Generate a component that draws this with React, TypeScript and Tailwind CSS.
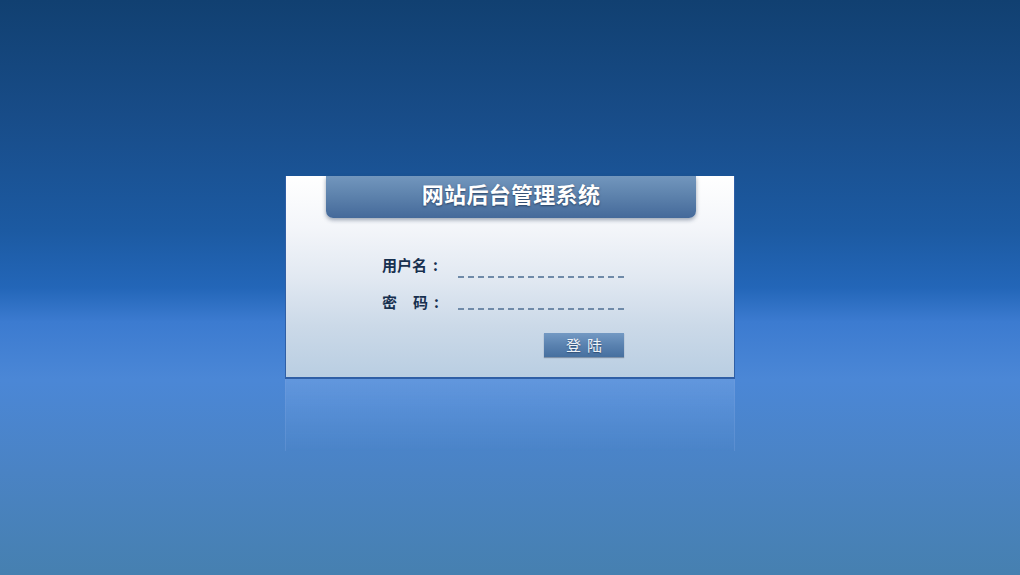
import React from "react";

const FONT = '"Noto Sans CJK SC", "Liberation Sans", sans-serif';

function DashedInput({ type = "text" }: { type?: string }) {
  return (
    <input
      type={type}
      className="w-[166px] h-[20px] bg-transparent outline-none border-0 border-b-2 border-dashed border-[#6f8aa8] text-sm text-[#1b3556]"
    />
  );
}

export default function App() {
  return (
    <div
      className="w-full h-[575px] overflow-hidden flex flex-col items-center pt-[176px] bg-[linear-gradient(180deg,#114071_0%,#184c88_20%,#1c5aa2_40%,#2366b8_50%,#3c7bd0_56%,#4b87d6_66%,#4a83c4_82%,#4680b0_100%)]"
      style={{ fontFamily: FONT }}
    >
      {/* login panel */}
      <div className="relative w-[450px] h-[203px] border-x border-b-2 border-[#2f5fa6] bg-[linear-gradient(180deg,#ffffff_0%,#f4f6fa_25%,#e2e9f2_50%,#cbd9e8_75%,#b9cee2_100%)]">
        <div className="absolute left-[40px] top-0 w-[370px] h-[42px] pb-[7px] rounded-b-[7px] bg-[linear-gradient(180deg,#7296bd_0%,#5e83ad_45%,#44699a_100%)] shadow-[0_2px_4px_rgba(40,60,90,0.45)] flex items-center justify-center">
          <span className="text-[22px] font-bold text-white tracking-[0.3px] [text-shadow:0_1px_2px_rgba(20,40,70,0.7)]">
            网站后台管理系统
          </span>
        </div>

        <div className="pt-[76px] pl-[96px] flex flex-col">
          <div className="flex items-end h-[26px]">
            <span className="w-[76px] text-[15px] font-bold text-[#17304f] leading-none pb-[6px] flex">
              <span>用户名</span>
              <span className="ml-[6px]">:</span>
            </span>
            <DashedInput />
          </div>
          <div className="flex items-end h-[26px] mt-[6px]">
            <span className="w-[76px] text-[15px] font-bold text-[#17304f] leading-none pb-[1px] flex">
              <span>密</span>
              <span className="ml-[16px]">码</span>
              <span className="ml-[6px]">:</span>
            </span>
            <DashedInput type="password" />
          </div>
          <div className="flex pl-[162px] mt-[23px]">
            <button className="w-[80px] h-[24px] pb-[2px] leading-none text-[15px] text-[#eef3f8] tracking-[6px] pl-[6px] bg-[linear-gradient(180deg,#7399c3_0%,#5a82b0_50%,#46709f_100%)] shadow-[0_1px_1px_rgba(30,50,80,0.4)] [text-shadow:0_1px_1px_rgba(20,40,70,0.5)]">
              登陆
            </button>
          </div>
        </div>
      </div>

      {/* reflection */}
      <div className="w-[450px] h-[72px] border-x border-[rgba(120,160,220,0.35)] bg-[linear-gradient(180deg,rgba(140,180,235,0.35)_0%,rgba(140,180,235,0.15)_50%,rgba(140,180,235,0)_100%)]" />
    </div>
  );
}
